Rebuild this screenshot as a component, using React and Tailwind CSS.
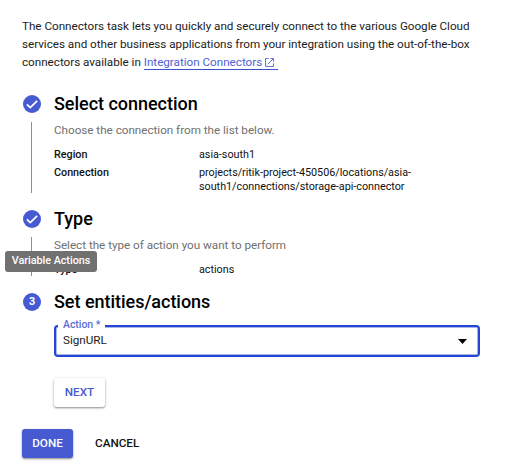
function CheckBadge() {
  return (
    <svg className="block h-[18px] w-[18px]" viewBox="0 0 18 18">
      <circle cx="9" cy="9" r="9" fill="#465ad2" />
      <path d="M3.9 9.3 L7.3 12.6 L14.1 5.8" fill="none" stroke="#fff" strokeWidth="1.8" />
    </svg>
  );
}

function StepHead({ badge, title }) {
  return (
    <div className="flex h-6 items-center gap-[13px] pl-px">
      {badge}
      <h2 className="whitespace-nowrap text-[18px] leading-6 font-medium tracking-[-0.03px] text-black">{title}</h2>
    </div>
  );
}

function StepBody({ bar, children }) {
  return (
    <div className="flex">
      <div className="w-8 shrink-0 pl-[9px]">
        <div className={`w-px bg-[#8f8f8f] ${bar}`} />
      </div>
      <div>{children}</div>
    </div>
  );
}

function Row({ label, children }) {
  return (
    <div className="flex text-[10.8px] leading-[14.4px] tracking-[-0.02px] text-[#111]">
      <div className="w-[145px] shrink-0 font-medium">{label}</div>
      <div className="whitespace-nowrap">{children}</div>
    </div>
  );
}

export default function App() {
  return (
    <div className="relative h-[464px] w-[512px] overflow-hidden bg-white pl-[22px] pt-[17px] font-['Roboto',sans-serif]">
      <p className="h-[75px] whitespace-nowrap text-[11.7px] leading-[18px] tracking-[-0.02px] text-[#1c1c1c]">
        The Connectors task lets you quickly and securely connect to the various Google Cloud
        <br />
        services and other business applications from your integration using the out-of-the-box
        <br />
        connectors available in{' '}
        <a className="inline-flex h-[17px] items-center border-b border-[#3a50cf] pt-[2px] pr-[4px] align-top text-[#4f62d6]">
          <span className="leading-[18px]">Integration Connectors</span>
          <svg className="mt-px ml-[3px] h-[9px] w-[9px]" viewBox="0 0 10 10" fill="none" stroke="#4f62d6">
            <path d="M4 .6H.6V9.4H9.4V6M6 .6H9.4V4M9.2 .8L3 7" />
          </svg>
        </a>
      </p>

      <StepHead badge={<CheckBadge />} title="Select connection" />
      <div className="h-[91px] pt-[6px]">
        <StepBody bar="h-[71px]">
          <p className="-mt-px mb-[9px] whitespace-nowrap text-[11.7px] leading-[18px] tracking-[-0.02px] text-[#707070]">
            Choose the connection from the list below.
          </p>
          <div className="flex flex-col gap-[3.6px]">
            <Row label="Region">asia-south1</Row>
            <Row label="Connection">
              projects/ritik-project-450506/locations/asia-
              <br />
              south1/connections/storage-api-connector
            </Row>
          </div>
        </StepBody>
      </div>

      <StepHead badge={<CheckBadge />} title="Type" />
      <div className="h-[59px] pt-[6px]">
        <StepBody bar="h-[39px]">
          <p className="-mt-px mb-[9px] whitespace-nowrap text-[11.7px] leading-[18px] tracking-[-0.02px] text-[#707070]">
            Select the type of action you want to perform
          </p>
          <Row label="Type">actions</Row>
        </StepBody>
      </div>

      <StepHead
        badge={
          <span className="flex h-[18px] w-[18px] items-center justify-center rounded-full bg-[#465ad2] text-[10.8px] font-bold text-white">
            3
          </span>
        }
        title="Set entities/actions"
      />
      <div className="pt-[11px] pl-8">
        <div className="relative flex h-8 w-[426px] items-center justify-between rounded-[4px] border-2 border-[#2545d3] pr-[11px] pl-[7px] shadow-[inset_0_0_0_1px_#aab6ee]">
          <span className="absolute -top-[9px] left-[2px] bg-white px-[5px] text-[10.5px] leading-[14px] font-medium tracking-[-0.05px] text-[#5c6ed8]">
            Action *
          </span>
          <span className="mb-[2px] text-[11.7px] leading-[18px] tracking-[-0.02px] text-[#1c1c1c]">SignURL</span>
          <svg className="h-[5px] w-[9px]" viewBox="0 0 9 5">
            <path d="M0 0H9L4.5 5Z" />
          </svg>
        </div>
        <button className="mt-[21px] block h-[29px] w-[51px] rounded-[3px] bg-white text-[11.7px] font-medium text-[#465ad2] shadow-[0_1px_2px_rgba(0,0,0,0.35),0_1px_3px_rgba(0,0,0,0.15)]">
          NEXT
        </button>
      </div>
      <div className="mt-[22px] flex">
        <button className="h-[29px] w-[51px] rounded-[3px] bg-[#465ad2] text-[11.7px] font-medium text-white shadow-[0_1px_2px_rgba(0,0,0,0.35),0_1px_3px_rgba(0,0,0,0.15)]">
          DONE
        </button>
        <button className="ml-[22px] text-[11.7px] font-medium text-[#111]">CANCEL</button>
      </div>

      <div className="absolute top-[251px] left-[5px] flex h-[21px] w-[92px] items-center justify-center rounded-[3px] bg-[#717171] text-[10.8px] font-medium tracking-[-0.04px] whitespace-nowrap text-white">
        Variable Actions
      </div>
    </div>
  );
}
